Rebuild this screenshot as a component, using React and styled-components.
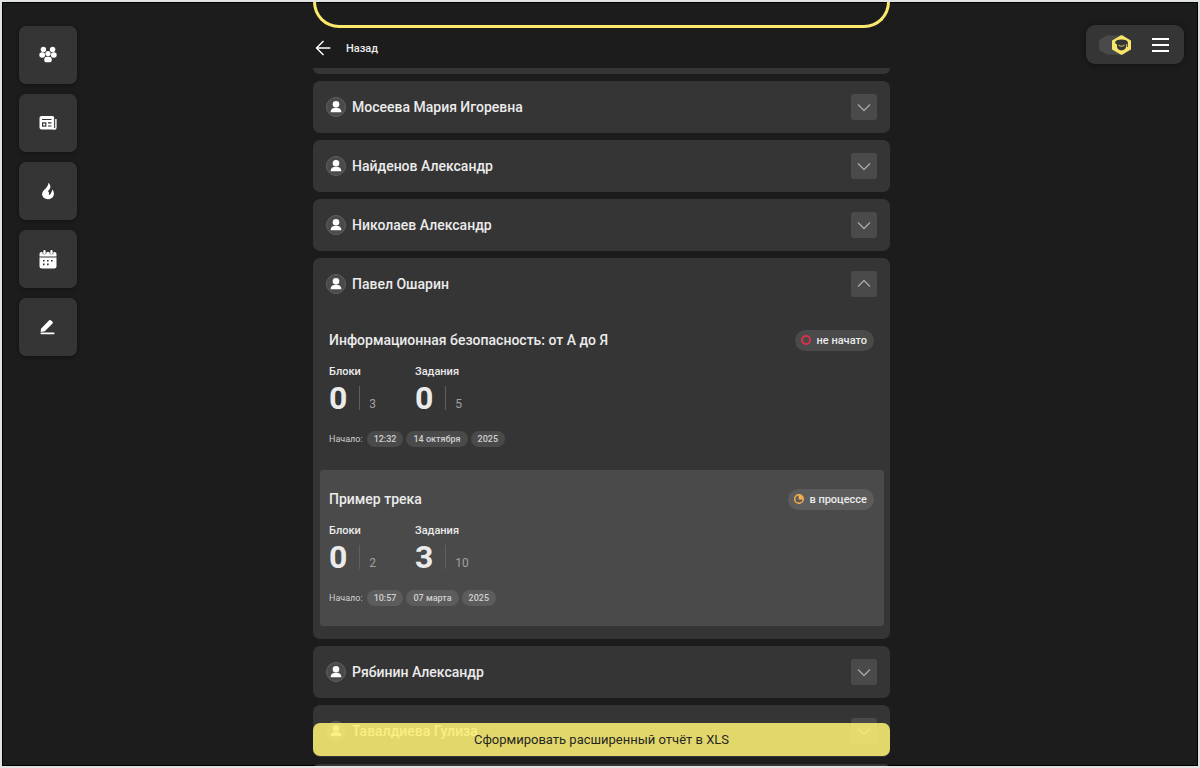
import { useState } from "react";
import styled, { createGlobalStyle } from "styled-components";

const students = [
  { id: 1, name: "Мосеева Мария Игоревна", tracks: [] },
  { id: 2, name: "Найденов Александр", tracks: [] },
  { id: 3, name: "Николаев Александр", tracks: [] },
  {
    id: 4,
    name: "Павел Ошарин",
    tracks: [
      {
        title: "Информационная безопасность: от А до Я",
        status: "new",
        statusText: "не начато",
        stats: [
          { label: "Блоки", done: 0, total: 3 },
          { label: "Задания", done: 0, total: 5 },
        ],
        start: ["12:32", "14 октября", "2025"],
      },
      {
        title: "Пример трека",
        status: "progress",
        statusText: "в процессе",
        stats: [
          { label: "Блоки", done: 0, total: 2 },
          { label: "Задания", done: 3, total: 10 },
        ],
        start: ["10:57", "07 марта", "2025"],
      },
    ],
  },
  { id: 5, name: "Рябинин Александр", tracks: [] },
  { id: 6, name: "Тавалдиева Гулиза", tracks: [] },
];

const GroupIcon = () => (
  <svg width="18" height="18" viewBox="0 0 18 18" fill="#fff">
    <circle cx="4.4" cy="3.5" r="2.7" />
    <circle cx="13.6" cy="3.5" r="2.7" />
    <ellipse cx="3.2" cy="9" rx="2.9" ry="2.8" />
    <ellipse cx="14.8" cy="9" rx="2.9" ry="2.8" />
    <circle cx="9" cy="7.6" r="2.6" />
    <rect x="5.2" y="10.7" width="7.6" height="5.6" rx="2.6" />
  </svg>
);

const NewsIcon = () => (
  <svg width="18" height="18" viewBox="0 0 18 18">
    <path fill="#fff" d="M2.500 2h10.800a2 2 0 0 1 2 2v11.500H2.500a2 2 0 0 1-2-2V4a2 2 0 0 1 2-2z" />
    <path fill="none" stroke="#fff" strokeWidth="1.4" d="M14.500 15h1.100a1.300 1.300 0 0 0 1.300-1.300V5" />
    <path fill="none" stroke="#353535" strokeWidth="1.2" d="M3 5.500h9.500M9 8.900h3.500M9 12h3.500" />
    <rect x="3.6" y="8.9" width="3.2" height="3.2" fill="none" stroke="#353535" strokeWidth="1.2" />
    <path stroke="#353535" strokeWidth=".6" d="M15.400 4v10" />
  </svg>
);

const FireIcon = () => (
  <svg width="18" height="18" viewBox="0 0 18 18" fill="#fff">
    <path d="M9.200.8c.4 2.300-.9 3.900-2.500 5.600C4.700 8.300 3.100 9.700 3.100 12c0 3 2.500 5.200 5.800 5.200 3.500 0 6-2.300 6-5.500 0-1.700-.7-3-1.700-4.100-.1 1-.2 2-1 2.800-.1 1.300-1.200 2.400-2.600 2.500.8-1.100.6-2-.1-2.800-.6-.7-.2-1.500.6-2.300C12.400 5.600 11.500 2.600 9.200.8z" />
  </svg>
);

const CalendarIcon = () => (
  <svg width="18" height="20" viewBox="0 0 18 20">
    <path
      fill="#fff"
      d="M.5 7.500V5a2 2 0 0 1 2-2h13a2 2 0 0 1 2 2v2.500zM.5 8.500h17V17a2.500 2.500 0 0 1-2.500 2.500H3A2.500 2.500 0 0 1 .5 17z"
    />
    <path stroke="#353535" strokeWidth="4.2" strokeLinecap="round" d="M5.500 2.500v1M12.500 2.500v1" />
    <path stroke="#fff" strokeWidth="2.4" strokeLinecap="round" d="M5.500 2.300v2M12.500 2.300v2" />
    <path
      fill="#353535"
      d="M4 11h1.600v1.600H4zM8 11h1.600v1.600H8zM12 11h1.600v1.600H12zM4 14.600h1.600v1.600H4zM8 14.600h1.600v1.600H8z"
    />
  </svg>
);

const PenIcon = () => (
  <svg width="18" height="18" viewBox="0 0 18 18" fill="#fff">
    <path d="M2 10.800L10.200 2.300q.8-.8 1.600 0l1.700 1.500q.8.8 0 1.600L5.800 13.200 1.600 14z" />
    <rect x="1.5" y="14.6" width="14" height="1.7" rx=".8" />
  </svg>
);

const PersonIcon = () => (
  <svg width="20" height="20" viewBox="0 0 20 20">
    <circle cx="10" cy="10" r="9.5" fill="#4a4a4a" stroke="#606060" />
    <circle cx="10" cy="7.2" r="3.3" fill="#fff" />
    <path fill="#fff" d="M4.600 15.200c0-2.900 2.100-4.400 5.400-4.400s5.400 1.500 5.400 4.400z" />
  </svg>
);

const ChevronIcon = ({ open }) => (
  <svg width="14" height="14" viewBox="0 0 14 14" fill="none" stroke="#a8a8a8" strokeWidth="1.3">
    <path d={open ? "M1 9.500l6-6 6 6" : "M1 4.500l6 6 6-6"} />
  </svg>
);

const ArrowIcon = () => (
  <svg width="16" height="16" viewBox="0 0 16 16" fill="none" stroke="#fff" strokeWidth="1.4">
    <path d="M15.300 8H1.500M8.500 1L1.500 8l7 7" />
  </svg>
);

const StatusIcon = ({ status }) =>
  status === "new" ? (
    <svg width="10" height="10" viewBox="0 0 10 10">
      <circle cx="5" cy="5" r="4.1" fill="none" stroke="#e5304c" strokeWidth="1.8" />
    </svg>
  ) : (
    <svg width="10" height="10" viewBox="0 0 10 10">
      <circle cx="5" cy="5" r="4.3" fill="none" stroke="#fbb04c" strokeWidth="1.4" />
      <path fill="#fbb04c" d="M4.600 1v4.400H9A4.400 4.400 0 0 0 4.600 1z" />
    </svg>
  );

const ThemeIcon = () => (
  <svg width="38" height="20" viewBox="0 0 38 20">
    <path fill="#4a4a4a" d="M0 6.500Q0 5 1.300 4.200L8 .5h18v19H8l-6.700-3.700Q0 15 0 13.500z" />
    <path
      fill="#f8e669"
      stroke="#f8e669"
      strokeWidth="2"
      strokeLinejoin="round"
      d="M22.500 1.200L31 6v8l-8.500 4.800L14 14V6z"
    />
    <ellipse cx="22.5" cy="7.4" rx="6.4" ry="2.9" fill="#353535" />
    <path fill="#353535" d="M18 8h9v3.600c0 2.300-1.800 3.900-4.500 3.900S18 13.900 18 11.600z" />
    <path fill="none" stroke="#353535" d="M28.300 8v4" />
    <path fill="none" stroke="#f8e669" strokeWidth=".9" d="M19.500 10.200l2 .9h2l2-.9" />
  </svg>
);

const BurgerIcon = () => (
  <svg width="17" height="14" viewBox="0 0 17 14" stroke="#fff" strokeWidth="2">
    <path d="M0 1h17M0 7h17M0 13h17" />
  </svg>
);

const navItems = [
  { label: "Группы", Icon: GroupIcon },
  { label: "Новости", Icon: NewsIcon },
  { label: "Активность", Icon: FireIcon },
  { label: "Календарь", Icon: CalendarIcon },
  { label: "Редактор", Icon: PenIcon },
];

const Track = ({ track, highlighted }) => (
  <TrackBox $highlighted={highlighted}>
    <TrackHeader>
      <TrackTitle>{track.title}</TrackTitle>
      <Status $highlighted={highlighted}>
        <StatusIcon status={track.status} />
        {track.statusText}
      </Status>
    </TrackHeader>
    <Stats>
      {track.stats.map((stat) => (
        <div key={stat.label}>
          <StatLabel>{stat.label}</StatLabel>
          <StatRow>
            <Done>{stat.done}</Done>
            <Total>{stat.total}</Total>
          </StatRow>
        </div>
      ))}
    </Stats>
    <StartRow>
      <span>Начало:</span>
      {track.start.map((part) => (
        <Pill key={part} $highlighted={highlighted}>
          {part}
        </Pill>
      ))}
    </StartRow>
  </TrackBox>
);

const Student = ({ student }) => {
  const [open, setOpen] = useState(student.tracks.length > 0);

  return (
    <Card>
      <CardHeader>
        <PersonIcon />
        <Name>{student.name}</Name>
        <ToggleButton
          type="button"
          aria-label={student.name}
          aria-expanded={open}
          onClick={() => setOpen(!open)}
        >
          <ChevronIcon open={open} />
        </ToggleButton>
      </CardHeader>
      {open && student.tracks.length > 0 && (
        <Tracks>
          {student.tracks.map((track, index) => (
            <Track key={track.title} track={track} highlighted={index % 2 === 1} />
          ))}
        </Tracks>
      )}
    </Card>
  );
};

const App = () => {
  return (
    <>
      <GlobalStyle />
      <Page>
        <Sidebar>
          {navItems.map(({ label, Icon }) => (
            <NavButton key={label} type="button" aria-label={label}>
              <Icon />
            </NavButton>
          ))}
        </Sidebar>
        <Main>
          <Banner />
          <BackButton type="button">
            <ArrowIcon />
            Назад
          </BackButton>
          <List>
            <CardEdge $side="bottom" />
            {students.map((student) => (
              <Student key={student.id} student={student} />
            ))}
            <CardEdge $side="top" />
          </List>
          <ExportButton type="button">Сформировать расширенный отчёт в XLS</ExportButton>
        </Main>
        <Corner>
          <Menu>
            <PlainButton type="button" aria-label="Сменить тему">
              <ThemeIcon />
            </PlainButton>
            <PlainButton type="button" aria-label="Меню">
              <BurgerIcon />
            </PlainButton>
          </Menu>
        </Corner>
      </Page>
    </>
  );
};

const GlobalStyle = createGlobalStyle`
  * {
    box-sizing: border-box;
  }

  body {
    margin: 0;
    background: #1c1c1c;
    color: #ebebeb;
    font-family: Roboto, "Liberation Sans", sans-serif;
  }

  button {
    padding: 0;
    border: none;
    color: inherit;
    font-family: inherit;
    cursor: pointer;
  }

  svg {
    display: block;
    flex-shrink: 0;
  }
`;

const Page = styled.div`
  display: grid;
  grid-template-columns: 1fr minmax(0, 577px) 1fr;
  height: 100vh;
  padding-left: 3px;
  overflow: hidden;
  border: 2px solid #dfe3e1;
  box-shadow: inset 0 0 0 1px #000;
`;

const Sidebar = styled.nav`
  display: flex;
  flex-direction: column;
  align-items: flex-start;
  gap: 10px;
  padding: 24px 14px;
`;

const NavButton = styled.button`
  display: flex;
  align-items: center;
  justify-content: center;
  width: 58px;
  height: 58px;
  border-radius: 7px;
  background: #353535;
  box-shadow: 0 1px 4px rgba(0, 0, 0, 0.4);
`;

const Main = styled.main`
  position: relative;
  display: flex;
  flex-direction: column;
  min-height: 0;
`;

const Banner = styled.div`
  flex-shrink: 0;
  height: 26px;
  border: 3px solid #fbe96d;
  border-top: none;
  border-radius: 0 0 28px 28px;
`;

const BackButton = styled.button`
  display: flex;
  flex-shrink: 0;
  align-items: center;
  gap: 15px;
  height: 40px;
  padding-left: 2px;
  background: #1c1c1c;
  font-size: 11px;
  font-weight: 500;
`;

const List = styled.div`
  display: flex;
  flex: 1;
  flex-direction: column;
  gap: 7px;
  min-height: 0;
  overflow: hidden;
`;

const CardEdge = styled.div`
  flex-shrink: 0;
  height: 6px;
  border-radius: ${({ $side }) => ($side === "top" ? "7px 7px 0 0" : "0 0 7px 7px")};
  background: #353535;
`;

const Card = styled.section`
  flex-shrink: 0;
  border-radius: 7px;
  background: #353535;
`;

const CardHeader = styled.header`
  display: flex;
  align-items: center;
  gap: 6px;
  height: 52px;
  padding: 0 13px;
`;

const Name = styled.h2`
  flex: 1;
  margin: 0;
  font-size: 14px;
  font-weight: 500;
`;

const ToggleButton = styled.button`
  display: flex;
  align-items: center;
  justify-content: center;
  width: 26px;
  height: 26px;
  border-radius: 3px;
  background: #4a4a4a;
`;

const Tracks = styled.div`
  display: flex;
  flex-direction: column;
  gap: 3px;
  padding: 1px 6px 13px 7px;
`;

const TrackBox = styled.article`
  padding: 18px 10px 20px 9px;
  border-radius: 3px;
  background: ${({ $highlighted }) => ($highlighted ? "#4a4a4a" : "#353535")};
`;

const TrackHeader = styled.div`
  display: flex;
  align-items: center;
  justify-content: space-between;
  height: 22px;
`;

const TrackTitle = styled.h3`
  margin: 0;
  font-size: 14px;
  font-weight: 500;
`;

const Status = styled.span`
  display: flex;
  align-items: center;
  gap: 5px;
  height: 21px;
  padding: 0 7px 0 6px;
  border-radius: 11px;
  background: ${({ $highlighted }) => ($highlighted ? "#5c5c5c" : "#4a4a4a")};
  font-size: 11px;
  font-weight: 500;
`;

const Stats = styled.div`
  display: grid;
  grid-template-columns: 86px 86px;
  margin-top: 14px;
`;

const StatLabel = styled.div`
  font-size: 11px;
  font-weight: 500;
  line-height: 14px;
`;

const StatRow = styled.div`
  display: flex;
  align-items: center;
  gap: 12px;
  height: 24px;
  margin-top: 7px;
`;

const Done = styled.strong`
  font-size: 32px;
  font-weight: 700;
  line-height: 24px;
`;

const Total = styled.span`
  height: 24px;
  padding: 11px 0 0 9px;
  border-left: 1px solid #5f5f5f;
  color: #a0a0a0;
  font-size: 12px;
  line-height: 14px;
`;

const StartRow = styled.div`
  display: flex;
  align-items: center;
  gap: 3px;
  margin-top: 21px;
  color: #d0d0d0;
  font-size: 9px;

  span:first-child {
    margin-right: 1px;
  }
`;

const Pill = styled.span`
  padding: 0 7px;
  border-radius: 8px;
  background: ${({ $highlighted }) => ($highlighted ? "#5c5c5c" : "#4a4a4a")};
  font-weight: 500;
  line-height: 16px;
`;

const ExportButton = styled.button`
  position: absolute;
  right: 0;
  bottom: 10px;
  left: 0;
  height: 33px;
  border-radius: 7px;
  background: rgba(251, 238, 115, 0.88);
  color: #262626;
  font-size: 13px;
`;

const Corner = styled.div`
  display: flex;
  align-items: flex-start;
  justify-content: flex-end;
  padding: 23px 14px;
`;

const Menu = styled.div`
  display: flex;
  align-items: center;
  gap: 15px;
  height: 39px;
  padding: 0 15px 0 13px;
  border-radius: 9px;
  background: #353535;
  box-shadow: 0 1px 6px rgba(0, 0, 0, 0.4);
`;

const PlainButton = styled.button`
  background: none;
`;

export default App;
